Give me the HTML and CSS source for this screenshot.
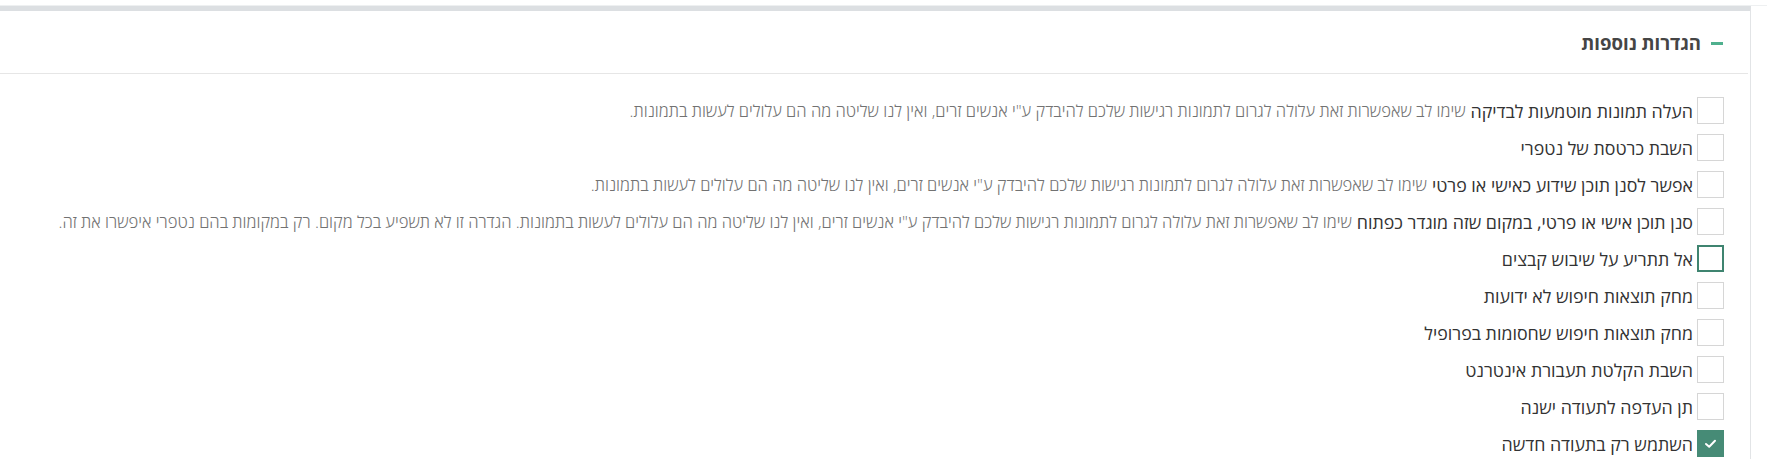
FILE: index.html
```html
<!DOCTYPE html>
<html lang="he" dir="rtl">
<head>
<meta charset="utf-8">
<title>הגדרות נוספות</title>
<link rel="stylesheet" href="styles.css">
</head>
<body>
<div class="page">
  <section class="panel">
    <header class="panel-head">
      <span class="collapse-icon"></span>
      <h2 class="panel-title">הגדרות נוספות</h2>
    </header>
    <div class="panel-body">
      <label class="row">
        <span class="box"></span>
        <span class="label">העלה תמונות מוטמעות לבדיקה</span>
        <span class="desc">שימו לב שאפשרות זאת עלולה לגרום לתמונות רגישות שלכם להיבדק ע"י אנשים זרים, ואין לנו שליטה מה הם עלולים לעשות בתמונות.</span>
      </label>
      <label class="row">
        <span class="box"></span>
        <span class="label">השבת כרטסת של נטפרי</span>
      </label>
      <label class="row">
        <span class="box"></span>
        <span class="label">אפשר לסנן תוכן שידוע כאישי או פרטי</span>
        <span class="desc">שימו לב שאפשרות זאת עלולה לגרום לתמונות רגישות שלכם להיבדק ע"י אנשים זרים, ואין לנו שליטה מה הם עלולים לעשות בתמונות.</span>
      </label>
      <label class="row">
        <span class="box"></span>
        <span class="label">סנן תוכן אישי או פרטי, במקום שזה מוגדר כפתוח</span>
        <span class="desc">שימו לב שאפשרות זאת עלולה לגרום לתמונות רגישות שלכם להיבדק ע"י אנשים זרים, ואין לנו שליטה מה הם עלולים לעשות בתמונות. הגדרה זו לא תשפיע בכל מקום. רק במקומות בהם נטפרי איפשרו את זה.</span>
      </label>
      <label class="row">
        <span class="box focused"></span>
        <span class="label">אל תתריע על שיבוש קבצים</span>
      </label>
      <label class="row">
        <span class="box"></span>
        <span class="label">מחק תוצאות חיפוש לא ידועות</span>
      </label>
      <label class="row">
        <span class="box"></span>
        <span class="label">מחק תוצאות חיפוש שחסומות בפרופיל</span>
      </label>
      <label class="row">
        <span class="box"></span>
        <span class="label">השבת הקלטת תעבורת אינטרנט</span>
      </label>
      <label class="row">
        <span class="box"></span>
        <span class="label">תן העדפה לתעודה ישנה</span>
      </label>
      <label class="row">
        <span class="box checked"><svg viewBox="0 0 27 27" width="27" height="27"><path d="M9 14 L12.2 16.8 L18 10.8" fill="none" stroke="#fff" stroke-width="2" stroke-linecap="round" stroke-linejoin="round"/></svg></span>
        <span class="label">השתמש רק בתעודה חדשה</span>
      </label>
    </div>
  </section>
</div>
</body>
</html>
```
FILE: styles.css
```css
html, body {
  margin: 0;
  padding: 0;
  background: #fff;
}
body {
  font-family: "Open Sans", "DejaVu Sans", sans-serif;
  color: #333;
  overflow: hidden;
}
.page {
  margin-top: 5px;
  border-top: 1px solid #eef0f1;
  padding: 0 16px 0 0;
}
.panel {
  border-top: 5px solid #dcdfe2;
  border-right: 1px solid #e2e4e6;
  background: #fff;
  min-height: 460px;
}
.panel-head {
  height: 62px;
  border-bottom: 1px solid #e6e6e6;
  display: flex;
  align-items: center;
  padding-right: 25px;
  margin-right: 2px;
  gap: 10px;
}
.collapse-icon {
  width: 12px;
  height: 3px;
  background: #4fb08e;
  margin-top: 2px;
}
.panel-title {
  margin: 0;
  font-size: 18.6px;
  font-weight: 700;
  color: #454545;
}
.panel-body {
  padding: 18px 26px 0 0;
}
.row {
  display: flex;
  align-items: center;
  height: 37px;
  white-space: nowrap;
}
.box {
  flex: none;
  width: 27px;
  height: 27px;
  box-sizing: border-box;
  border: 1px solid #d6d6d6;
  background: #fff;
  margin-left: 4px;
}
.box.focused {
  border: 2px solid #3f8470;
}
.box.checked {
  border: none;
  background: #468b76;
}
.box svg {
  display: block;
}
.label {
  font-size: 17.8px;
  color: #333;
}
.desc {
  font-size: 16.6px;
  font-weight: 300;
  color: #727272;
  margin-right: 5px;
}
```
